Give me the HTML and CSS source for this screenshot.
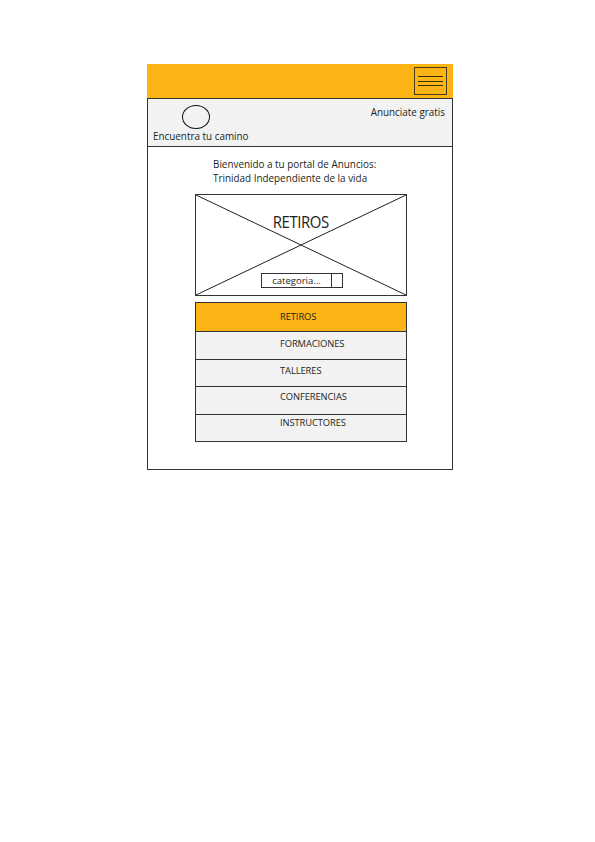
FILE: index.html
```html
<!DOCTYPE html>
<html lang="es">
<head>
<meta charset="utf-8">
<title>Encuentra tu camino</title>
<link rel="stylesheet" href="styles.css">
</head>
<body>
<div class="page">
  <div class="frame">
    <div class="topbar">
      <div class="burger"><span></span><span></span><span></span></div>
    </div>
    <div class="subbar">
      <div class="brand">
        <div class="logo"></div>
        <div class="brand-name">Encuentra tu camino</div>
      </div>
      <div class="cta">Anunciate gratis</div>
    </div>
    <div class="content">
      <p class="welcome">Bienvenido a tu portal de Anuncios:<br>Trinidad Independiente de la vida</p>
      <div class="hero">
        <svg class="cross" viewBox="0 0 210 100" preserveAspectRatio="none"><line x1="0" y1="0" x2="210" y2="100"/><line x1="210" y1="0" x2="0" y2="100"/></svg>
        <div class="hero-title">RETIROS</div>
        <div class="select"><span class="select-text">categoria...</span><span class="select-btn"></span></div>
      </div>
      <ul class="menu">
        <li class="item active">RETIROS</li>
        <li class="item">FORMACIONES</li>
        <li class="item">TALLERES</li>
        <li class="item">CONFERENCIAS</li>
        <li class="item">INSTRUCTORES</li>
      </ul>
    </div>
  </div>
</div>
</body>
</html>
```
FILE: styles.css
```css
* { box-sizing: border-box; }
body { margin: 0; background: #fff; font-family: "Open Sans", "Liberation Sans", sans-serif; color: #231f20; }
.page { padding: 64px 0 0 147px; }
.frame { width: 306px; }
.topbar { height: 34px; background: #fdb515; display: flex; justify-content: flex-end; align-items: center; padding-right: 6px; }
.burger { width: 33px; height: 28px; border: 1px solid #4a3a10; display: flex; flex-direction: column; justify-content: center; align-items: center; gap: 3.5px; }
.burger span { display: block; width: 25px; height: 1px; background: #3a2e10; }
.subbar { height: 49px; background: #f2f2f2; border: 1px solid #333; display: flex; justify-content: space-between; padding: 6px 7px 0 5px; }
.brand { display: flex; flex-direction: column; align-items: flex-start; }
.logo { width: 28px; height: 24px; border: 1px solid #111; border-radius: 50%; margin-left: 29px; }
.brand-name { font-size: 9.9px; line-height: 12px; margin-top: 1px; }
.cta { font-size: 9.9px; line-height: 12px; margin-top: 1px; }
.content { height: 323px; border: 1px solid #333; border-top: none; padding: 10px 0 0 47px; }
.welcome { margin: 0 0 0 18px; font-size: 9.9px; line-height: 14px; }
.hero { position: relative; width: 212px; height: 102px; margin-top: 9px; border: 1px solid #333; display: flex; flex-direction: column; align-items: center; }
.cross { position: absolute; left: 0; top: 0; width: 100%; height: 100%; }
.cross line { stroke: #231f20; stroke-width: 1; }
.hero-title { position: relative; font-size: 17px; letter-spacing: -0.5px; transform: scaleX(0.88); margin-top: 16px; line-height: 22px; }
.select { position: relative; margin-top: 40px; margin-left: 2px; width: 82px; height: 15px; border: 1px solid #333; background: #fff; display: flex; }
.select-text { flex: 1; font-size: 9.5px; line-height: 13px; text-align: center; border-right: 1px solid #333; }
.select-btn { width: 10px; }
.menu { list-style: none; margin: 6px 0 0 0; padding: 0; width: 212px; border: 1px solid #333; }
.item { height: 27.6px; background: #f2f2f2; border-top: 1px solid #333; font-size: 9.4px; letter-spacing: -0.1px; padding: 6px 0 0 84px; line-height: 12px; }
.item:first-child { border-top: none; padding-top: 8px; }
.item:nth-child(3) { padding-top: 5px; }
.item:nth-child(4) { padding-top: 4px; }
.item:nth-child(5) { padding-top: 2px; }
.item.active { background: #fdb515; height: 28px; }
```
